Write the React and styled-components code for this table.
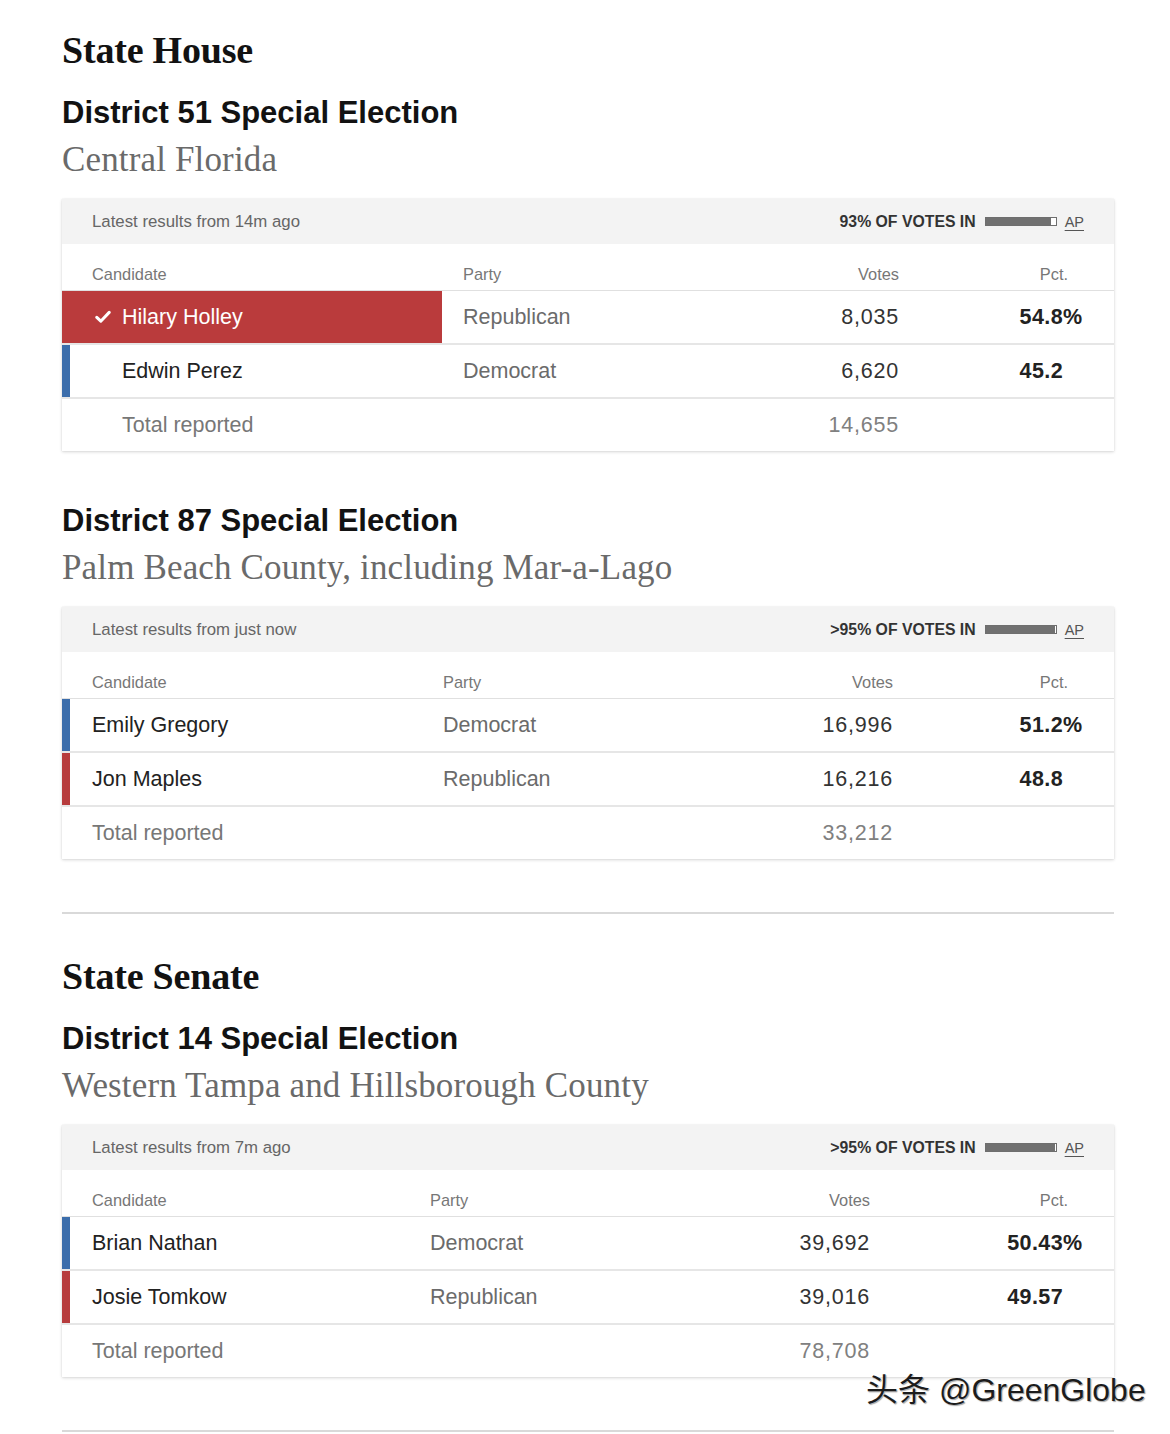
import React from 'react';
import styled, { createGlobalStyle } from 'styled-components';

const Global = createGlobalStyle`
  html, body { margin: 0; padding: 0; background: #fff; }
  body { font-family: "Liberation Sans", Arial, sans-serif; color: #121212; }
`;

const Page = styled.div`
  position: relative;
  width: 1170px;
  height: 1434px;
  box-sizing: border-box;
  padding: 27px 56px 0 62px;
  overflow: hidden;
`;

const Section = styled.section`
  display: flex;
  flex-direction: column;
`;

const SectionTitle = styled.h2`
  margin: ${p => (p.$first ? '0' : '39px')} 0 0;
  font-family: "Liberation Serif", "Times New Roman", serif;
  font-weight: 700;
  font-size: 38px;
  line-height: 46px;
  letter-spacing: -0.2px;
  color: #121212;
`;

const Race = styled.div`
  margin-top: 21px;
  & + & { margin-top: 51px; }
`;

const RaceTitle = styled.h3`
  margin: 0;
  font-family: "Liberation Sans", Arial, sans-serif;
  font-weight: 700;
  font-size: 31px;
  line-height: 38px;
  color: #121212;
`;

const Subtitle = styled.div`
  margin-top: 7px;
  font-family: "Liberation Serif", "Times New Roman", serif;
  font-size: 35px;
  line-height: 42px;
  letter-spacing: 0.15px;
  color: #6a6a6a;
`;

const Card = styled.div`
  margin-top: 18px;
  background: #fff;
  box-shadow: 0 1px 3px rgba(0, 0, 0, 0.16), 0 0 1px rgba(0, 0, 0, 0.1);
`;

const CardHeader = styled.div`
  display: flex;
  align-items: center;
  justify-content: space-between;
  height: 45px;
  padding: 0 30px;
  background: #f3f3f3;
`;

const Updated = styled.span`
  font-size: 16.8px;
  color: #666;
`;

const Reporting = styled.div`
  display: flex;
  align-items: center;
`;

const ReportingLabel = styled.span`
  font-size: 15.8px;
  font-weight: 700;
  color: #333;
  margin-right: 9px;
`;

const Meter = styled.div`
  width: 72px;
  height: 9px;
  box-sizing: border-box;
  border: 1px solid #6e6e6e;
  background: #fff;
  margin-right: 8px;
`;

const MeterFill = styled.div`
  height: 100%;
  background: #707070;
`;

const Source = styled.span`
  font-size: 14.5px;
  color: #555;
  text-decoration: underline;
  text-underline-offset: 3px;
`;

const Row = styled.div`
  display: grid;
  grid-template-columns: ${p => p.$cols};
`;

const HeadRow = styled(Row)`
  height: 47px;
  align-items: end;
  border-bottom: 1px solid #e0e0e0;
  font-size: 16.4px;
  color: #777;
  box-sizing: border-box;
`;

const HeadCell = styled.div`
  padding: 0 ${p => p.$pr || 0}px 6px ${p => p.$pl || 0}px;
  text-align: ${p => (p.$right ? 'right' : 'left')};
`;

const DataRow = styled(Row)`
  height: 52px;
  font-size: 21.5px;
  & + & { border-top: 2px solid #e6e6e6; }
`;

const barColor = { rep: '#b73c3d', dem: '#3b6dab' };

const CandidateCell = styled.div`
  display: flex;
  align-items: center;
  padding-left: ${p => p.$pl}px;
  background: ${p => (p.$winner ? '#ba3b3c' : 'transparent')};
  box-shadow: ${p => (p.$party && !p.$winner ? `inset 8px 0 0 ${barColor[p.$party]}` : 'none')};
  color: ${p => (p.$winner ? '#fff' : p.$muted ? '#777' : '#222')};
`;

const Check = styled.svg`
  width: 16px;
  height: 14px;
  margin-right: 11px;
  flex: none;
`;

const PartyCell = styled.div`
  display: flex;
  align-items: center;
  padding-left: 21px;
  color: #6b6b6b;
`;

const VotesCell = styled.div`
  display: flex;
  align-items: center;
  justify-content: flex-end;
  letter-spacing: 0.8px;
  color: ${p => (p.$muted ? '#808080' : '#333')};
`;

const PctCell = styled.div`
  display: flex;
  align-items: center;
  justify-content: flex-end;
  padding-right: 29px;
  font-weight: 700;
  letter-spacing: 0.4px;
  color: #222;
`;

const PctSign = styled.span`
  display: inline-block;
  width: 22px;
  text-align: left;
`;

const Divider = styled.hr`
  margin: 53px 0 0;
  border: 0;
  height: 2px;
  background: #d9d9d9;
`;

const Watermark = styled.div`
  position: absolute;
  left: 866px;
  top: 1370px;
  font-family: "Liberation Sans", "Noto Sans CJK SC", sans-serif;
  font-size: 32px;
  line-height: 40px;
  color: #1c1c1c;
  text-shadow: 0 0 2px #fff, 1px 1px 1px rgba(0, 0, 0, 0.45);
  white-space: nowrap;
`;

const races = {
  house: [
    {
      title: 'District 51 Special Election',
      sub: 'Central Florida',
      updated: 'Latest results from 14m ago',
      reporting: '93% OF VOTES IN',
      meter: 93,
      cols: '380px 307px 150px 1fr',
      checkCol: true,
      candidates: [
        { name: 'Hilary Holley', party: 'Republican', key: 'rep', votes: '8,035', pct: '54.8', winner: true },
        { name: 'Edwin Perez', party: 'Democrat', key: 'dem', votes: '6,620', pct: '45.2' },
      ],
      total: '14,655',
    },
    {
      title: 'District 87 Special Election',
      sub: 'Palm Beach County, including Mar-a-Lago',
      updated: 'Latest results from just now',
      reporting: '>95% OF VOTES IN',
      meter: 99,
      cols: '360px 321px 150px 1fr',
      candidates: [
        { name: 'Emily Gregory', party: 'Democrat', key: 'dem', votes: '16,996', pct: '51.2' },
        { name: 'Jon Maples', party: 'Republican', key: 'rep', votes: '16,216', pct: '48.8' },
      ],
      total: '33,212',
    },
  ],
  senate: [
    {
      title: 'District 14 Special Election',
      sub: 'Western Tampa and Hillsborough County',
      updated: 'Latest results from 7m ago',
      reporting: '>95% OF VOTES IN',
      meter: 99,
      cols: '347px 311px 150px 1fr',
      candidates: [
        { name: 'Brian Nathan', party: 'Democrat', key: 'dem', votes: '39,692', pct: '50.43' },
        { name: 'Josie Tomkow', party: 'Republican', key: 'rep', votes: '39,016', pct: '49.57' },
      ],
      total: '78,708',
    },
  ],
};

function RaceBlock({ race }) {
  const indent = race.checkCol ? 60 : 30;
  return (
    <Race>
      <RaceTitle>{race.title}</RaceTitle>
      <Subtitle>{race.sub}</Subtitle>
      <Card>
        <CardHeader>
          <Updated>{race.updated}</Updated>
          <Reporting>
            <ReportingLabel>{race.reporting}</ReportingLabel>
            <Meter>
              <MeterFill style={{ width: `${race.meter}%` }} />
            </Meter>
            <Source>AP</Source>
          </Reporting>
        </CardHeader>
        <HeadRow $cols={race.cols}>
          <HeadCell $pl={30}>Candidate</HeadCell>
          <HeadCell $pl={21}>Party</HeadCell>
          <HeadCell $right>Votes</HeadCell>
          <HeadCell $right $pr={46}>Pct.</HeadCell>
        </HeadRow>
        {race.candidates.map((c, i) => (
          <DataRow key={c.name} $cols={race.cols}>
            <CandidateCell $pl={c.winner ? 33 : indent} $winner={c.winner} $party={c.key}>
              {c.winner && (
                <Check viewBox="0 0 16 14">
                  <polyline points="1.8,7.4 5.8,11.2 14.2,2.4" fill="none" stroke="#fff" strokeWidth="3" strokeLinecap="round" strokeLinejoin="round" />
                </Check>
              )}
              {c.name}
            </CandidateCell>
            <PartyCell>{c.party}</PartyCell>
            <VotesCell>{c.votes}</VotesCell>
            <PctCell>
              {c.pct}
              <PctSign>{i === 0 ? '%' : ''}</PctSign>
            </PctCell>
          </DataRow>
        ))}
        <DataRow $cols={race.cols}>
          <CandidateCell $pl={indent} $muted>Total reported</CandidateCell>
          <PartyCell />
          <VotesCell $muted>{race.total}</VotesCell>
          <PctCell />
        </DataRow>
      </Card>
    </Race>
  );
}

export default function App() {
  return (
    <Page>
      <Global />
      <Section>
        <SectionTitle $first>State House</SectionTitle>
        {races.house.map(r => <RaceBlock key={r.title} race={r} />)}
      </Section>
      <Divider />
      <Section>
        <SectionTitle>State Senate</SectionTitle>
        {races.senate.map(r => <RaceBlock key={r.title} race={r} />)}
      </Section>
      <Divider />
      <Watermark>头条 @GreenGlobe</Watermark>
    </Page>
  );
}
